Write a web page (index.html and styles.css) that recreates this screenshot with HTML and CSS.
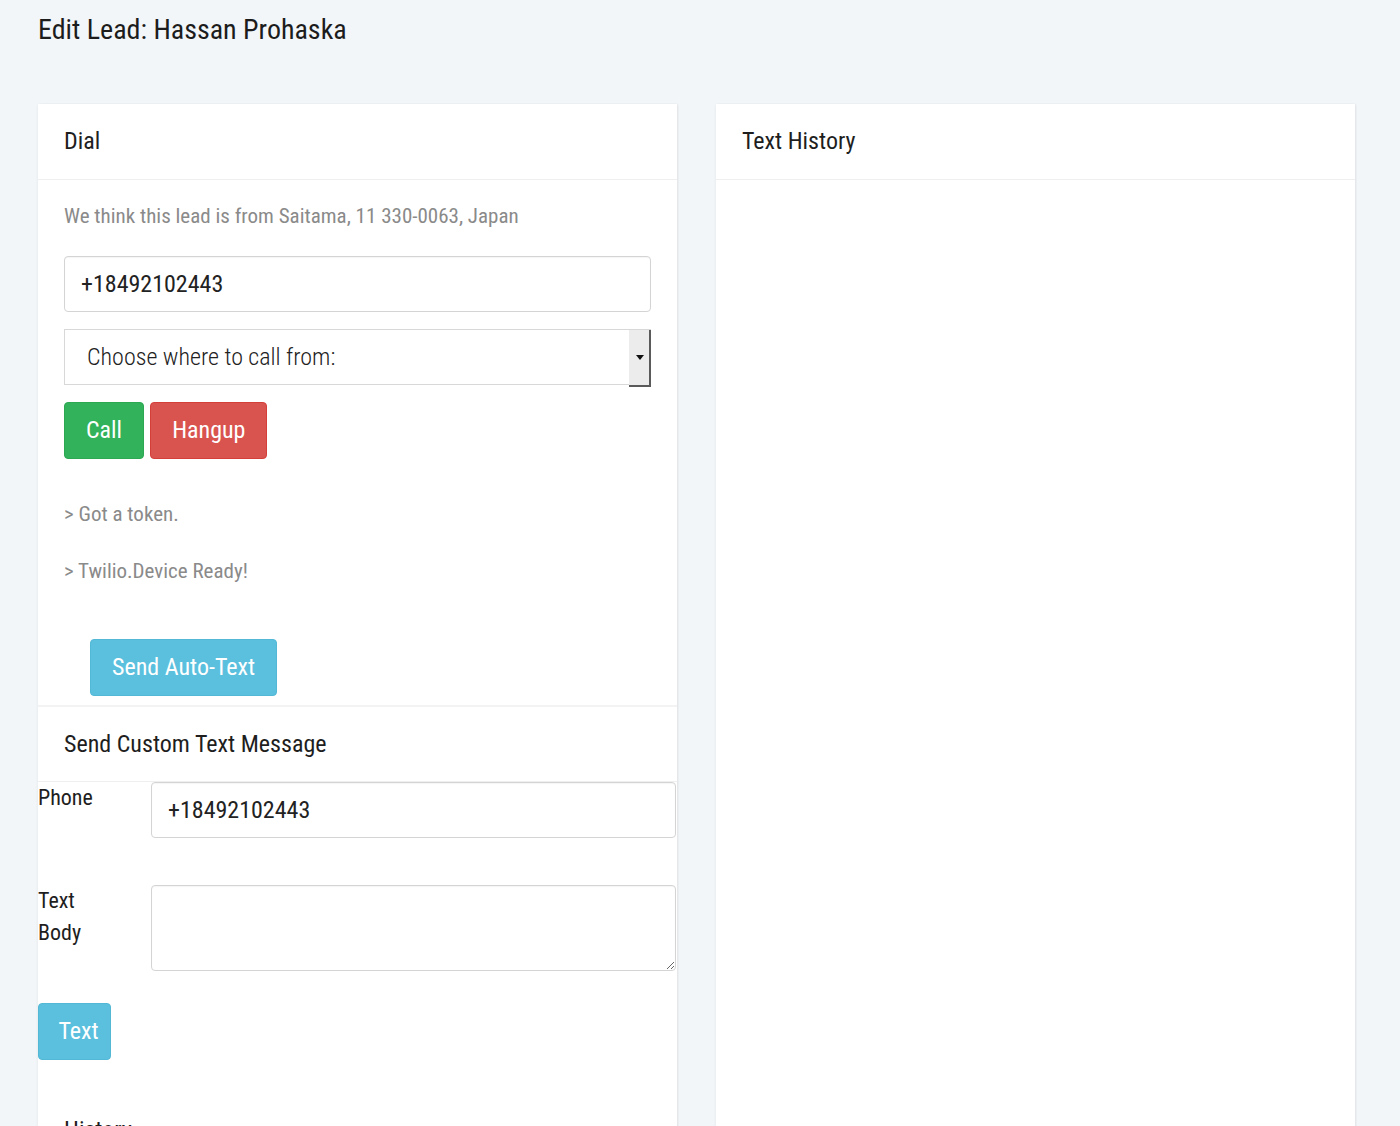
FILE: index.html
```html
<!DOCTYPE html>
<html>
<head>
<meta charset="utf-8">
<title>Edit Lead</title>
<link rel="stylesheet" href="styles.css">
</head>
<body>
<h1 class="page-title">Edit Lead: Hassan Prohaska</h1>
<div class="columns">
  <section class="card">
    <div class="card-header">Dial</div>
    <div class="card-body">
      <p class="location">We think this lead is from Saitama, 11 330-0063, Japan</p>
      <input class="form-control" type="text" value="+18492102443">
      <div class="select-wrap">
        <select class="form-select"><option>Choose where to call from:</option></select>
      </div>
      <div class="btn-row">
        <button class="btn btn-success">Call</button>
        <button class="btn btn-danger">Hangup</button>
      </div>
      <div class="log">
        <p>&gt; Got a token.</p>
        <p>&gt; Twilio.Device Ready!</p>
      </div>
      <button class="btn btn-info btn-auto">Send Auto-Text</button>
    </div>
    <div class="card-header card-subheader">Send Custom Text Message</div>
    <form class="sms-form">
      <div class="form-row">
        <label class="form-label">Phone</label>
        <input class="form-control" type="text" value="+18492102443">
      </div>
      <div class="form-row">
        <label class="form-label">Text<br>Body</label>
        <textarea class="form-control form-textarea"></textarea>
      </div>
      <button class="btn btn-info btn-text" type="button">Text</button>
    </form>
    <div class="history">History</div>
  </section>
  <section class="card">
    <div class="card-header">Text History</div>
  </section>
</div>
</body>
</html>
```
FILE: styles.css
```css
* { box-sizing: border-box; }
html, body { margin: 0; padding: 0; }
body {
  background: #f3f6f9;
  font-family: "Roboto Condensed", Roboto, "Liberation Sans", sans-serif;
  font-stretch: 75%;
  font-size: 24px;
  line-height: 34px;
  color: #222;
  overflow: hidden;
  height: 1126px;
}
.page-title {
  margin: 0;
  padding: 12px 38px 0;
  font-size: 28px;
  line-height: 36px;
  font-weight: 400;
  color: #1c1c1c;
}
.columns {
  display: grid;
  grid-template-columns: 639px 639px;
  column-gap: 39px;
  padding: 56px 38px 0;
}
.card {
  background: #fff;
  box-shadow: 0 1px 3px rgba(0,0,0,0.07), 1px 0 2px rgba(0,0,0,0.05);
  min-height: 1060px;
}
.card-header {
  padding: 0 26px;
  height: 76px;
  line-height: 75px;
  border-bottom: 1px solid #efefef;
  font-size: 24px;
  color: #1e1e1e;
}
.card-subheader {
  border-top: 2px solid #f3f3f3;
  height: 77px;
  line-height: 74px;
}
.card-body {
  padding: 19px 26px 9px;
}
.location {
  margin: 0 0 23px;
  color: #8a8a8a;
  font-size: 21px;
}
.form-control {
  display: block;
  width: 100%;
  height: 56px;
  border: 1px solid #d4d4d4;
  border-radius: 4px;
  padding: 0 16px;
  font-family: inherit;
  font-stretch: inherit;
  font-size: 24px;
  color: #222;
  background: #fff;
  box-shadow: inset 0 1px 1px rgba(0,0,0,0.04);
}
.select-wrap {
  position: relative;
  margin-top: 17px;
  height: 56px;
}
.form-select {
  -webkit-appearance: none;
  appearance: none;
  width: 100%;
  height: 56px;
  border: 1px solid #d8d8d8;
  border-radius: 0;
  background: #fff;
  padding: 0 22px;
  font-family: inherit;
  font-stretch: inherit;
  font-size: 24px;
  font-weight: 300;
  color: #222;
}
.select-wrap::after {
  content: "";
  position: absolute;
  right: 0;
  top: 1px;
  width: 20px;
  height: 55px;
  background: #ececec;
  border-right: 2px solid #5a5a5a;
  border-bottom: 2px solid #5a5a5a;
  pointer-events: none;
}
.select-wrap::before {
  content: "";
  position: absolute;
  right: 7px;
  top: 26px;
  border-left: 4px solid transparent;
  border-right: 4px solid transparent;
  border-top: 5px solid #111;
  z-index: 1;
  pointer-events: none;
}
.btn-row {
  display: flex;
  gap: 6px;
  margin-top: 17px;
}
.btn {
  height: 57px;
  padding: 0 21px;
  border: 1px solid transparent;
  border-radius: 4px;
  color: #fff;
  font-family: inherit;
  font-stretch: inherit;
  font-size: 24px;
  line-height: 55px;
  cursor: pointer;
}
.btn-success { background: #32b25a; border-color: #2ca852; }
.btn-danger { background: #d9534f; border-color: #d43f3a; }
.btn-info { background: #5bc0de; border-color: #52b8d6; }
.log {
  margin-top: 38px;
  color: #8a8a8a;
  font-size: 21px;
}
.log p { margin: 0 0 23px; line-height: 34px; }
.log p:last-child { margin-bottom: 0; }
.btn-auto {
  display: block;
  margin: 51px 0 0 26px;
}
.form-row {
  display: grid;
  grid-template-columns: 113px 525px;
  margin-bottom: 47px;
}
.form-label {
  font-size: 22px;
  line-height: 32px;
  color: #1e1e1e;
}
.form-textarea {
  height: 86px;
  resize: vertical;
}
.form-row + .form-row { margin-bottom: 32px; }
.btn-text {
  width: 73px;
  padding: 0 0 0 8px;
}
.history {
  padding: 53px 26px 0;
  font-size: 24px;
  color: #1e1e1e;
}
```
